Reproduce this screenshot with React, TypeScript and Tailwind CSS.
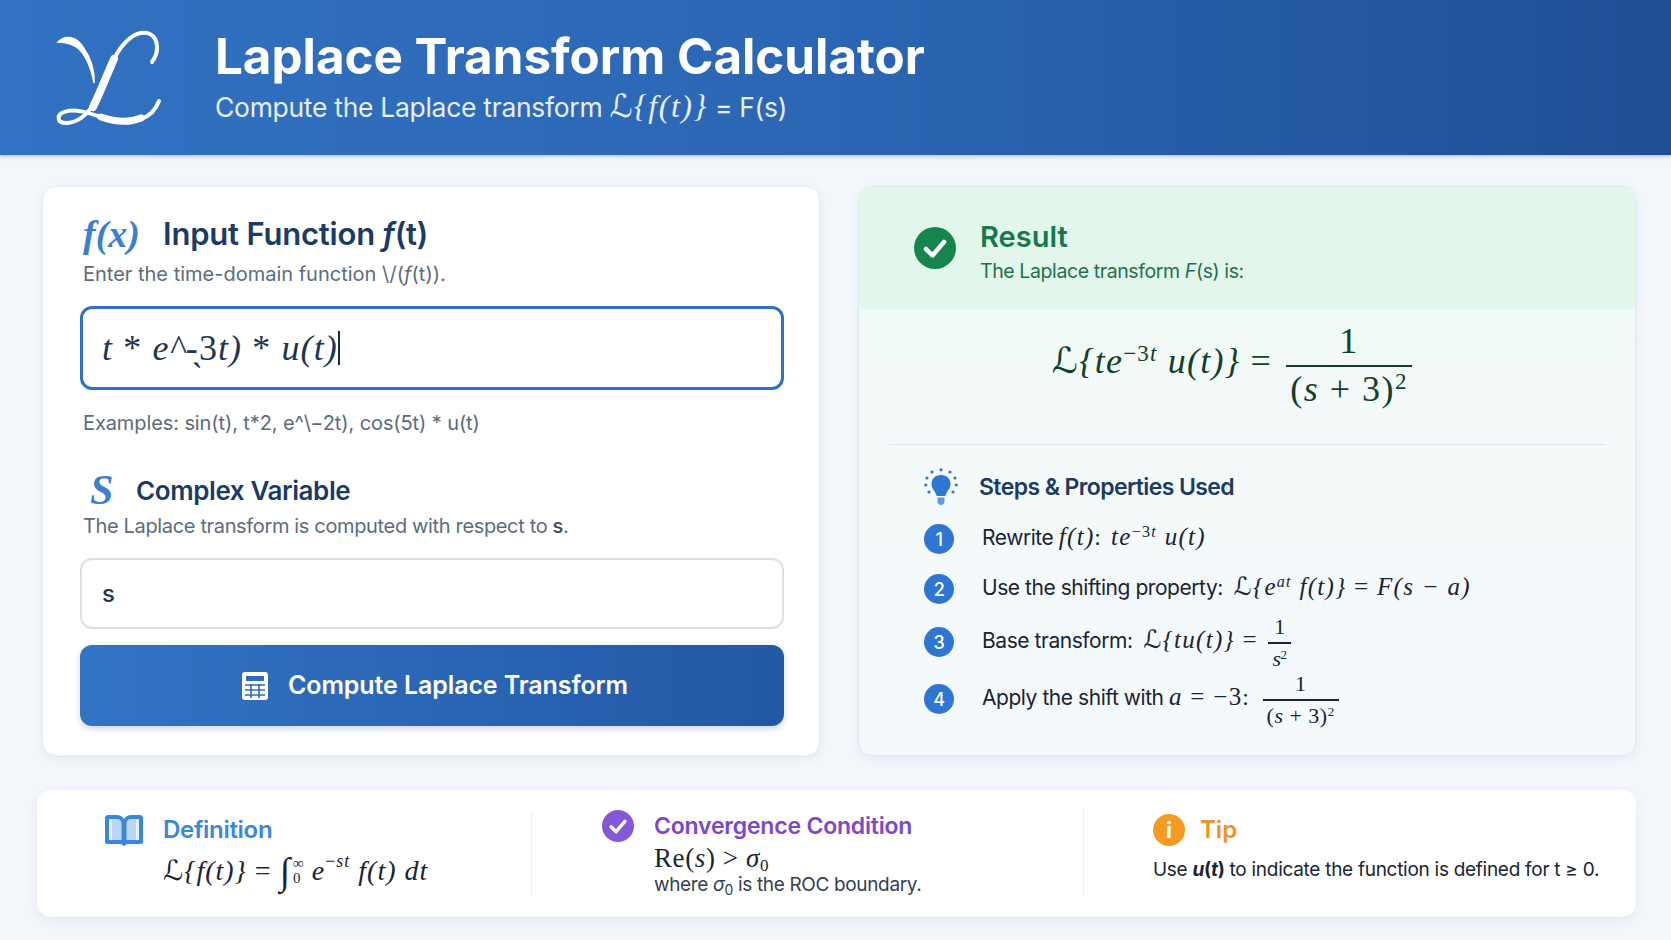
import type { ReactNode } from "react";

function M({ children, className = "" }: { children: ReactNode; className?: string }) {
  return <span className={`font-['Liberation_Serif','DejaVu_Serif',serif] italic whitespace-nowrap ${className}`}>{children}</span>;
}

function R({ children }: { children: ReactNode }) {
  return <span className="not-italic">{children}</span>;
}

function Scr() {
  return <span className="font-['DejaVu_Serif','DejaVu_Sans',serif] italic font-normal">ℒ</span>;
}

function Frac({ top, bottom, className = "", gap = "pb-1" }: { top: ReactNode; bottom: ReactNode; className?: string; gap?: string }) {
  return (
    <span className={`inline-flex flex-col items-center align-middle not-italic ${className}`}>
      <span className={`leading-none px-1 ${gap}`}>{top}</span>
      <span className="leading-none px-1 pt-1 border-t-2 border-current self-stretch text-center">{bottom}</span>
    </span>
  );
}

function Logo() {
  return (
    <svg width="115" height="105" viewBox="50 25 115 105" fill="none" stroke="white" strokeLinecap="round">
      <path d="M57 41 C64 34 75 35 82 46 C89 56 94 67 93 82 C90 66 85 55 78 48 C71 42 64 41 57 41 Z" fill="white" strokeWidth="1.500" />
      <path d="M151 61 C158 52 158 38 149 33 C136 28 122 40 113 58 C104 76 100 92 90 107 C84 116 74 122 65 122 C56 122 55 114 63 111 C74 107 88 112 100 116 C114 121 128 122 140 118 C149 115 155 108 158 100" strokeWidth="4" />
      <path d="M113 58 C105 76 99 92 92 106" strokeWidth="8" />
      <path d="M100 116 C114 121 128 122 140 117" strokeWidth="7" />
    </svg>
  );
}

function CheckDot({ size, color }: { size: number; color: string }) {
  return (
    <svg width={size} height={size} viewBox="0 0 42 42">
      <circle cx="21" cy="21" r="21" fill={color} />
      <path d="M12 22 L18.500 28.500 L30 15" fill="none" stroke="white" strokeWidth="4.500" strokeLinecap="round" strokeLinejoin="round" />
    </svg>
  );
}

function Calc() {
  return (
    <svg width="26" height="28" viewBox="0 0 26 28">
      <rect x="0" y="0" width="26" height="28" rx="3" fill="white" />
      <rect x="4" y="4" width="18" height="5" fill="#2f6bb9" />
      <path d="M3 13H23M3 18H23M3 23H23M9 12V26M17 12V26" stroke="#2f6bb9" strokeWidth="1.600" />
    </svg>
  );
}

function Bulb() {
  return (
    <svg width="34" height="38" viewBox="0 0 34 38" fill="#2f76d2">
      <path d="M17 7 C11 7 7.500 11 7.500 16 C7.500 20 10 22 11.500 25 C12 26.500 12.500 27.500 13 28 H21 C21.500 27.500 22 26.500 22.500 25 C24 22 26.500 20 26.500 16 C26.500 11 23 7 17 7 Z" />
      <path d="M13.500 29.500 H20.500 V33 C20.500 35.500 19 37 17 37 C15 37 13.500 35.500 13.500 33 Z" fill="#5f9be0" />
      <circle cx="17" cy="1.800" r="1.600" />
      <circle cx="8" cy="4" r="1.600" />
      <circle cx="26" cy="4" r="1.600" />
      <circle cx="3" cy="10" r="1.600" />
      <circle cx="31" cy="10" r="1.600" />
      <circle cx="1.800" cy="17" r="1.600" />
      <circle cx="32.200" cy="17" r="1.600" />
      <circle cx="5" cy="24" r="1.600" />
      <circle cx="29" cy="24" r="1.600" />
    </svg>
  );
}

function Book() {
  return (
    <svg width="38" height="31" viewBox="0 0 38 31">
      <path d="M0 3 C0 1 1.500 0 3.500 0 H11 C15 0 19 2 19 5 C19 2 23 0 27 0 H34.500 C36.500 0 38 1 38 3 V27 C38 28 37 29 36 29 H23 C21 29 20 31 19 31 C18 31 17 29 15 29 H2 C1 29 0 28 0 27 Z" fill="#3a87dc" />
      <path d="M4 4 H11 C14 4 16.500 5.500 16.500 8 V25 H4 Z M21.500 8 C21.500 5.500 24 4 27 4 H34 V25 H21.500 Z" fill="#e6f1fb" />
      <path d="M7 4 H11 C14 4 16.500 5.500 16.500 8 V25 H7 Z M21.500 8 C21.500 5.500 24 4 27 4 H31 V25 H21.500 Z" fill="#3a87dc" opacity="0.25" />
    </svg>
  );
}

function Num({ n }: { n: number }) {
  return (
    <span className="w-[30px] h-[30px] rounded-full bg-[#2f76d2] text-white text-[18px] font-medium flex items-center justify-center shrink-0">
      {n}
    </span>
  );
}

const mathCls = "text-[25px] tracking-[1.300px]";

const steps: ReactNode[] = [
  <>
    Rewrite <M className={mathCls}>f(t)</M>:&nbsp; <M className={mathCls}>te<sup className="text-[16px] not-italic">−3<i>t</i></sup> u(t)</M>
  </>,
  <>
    Use the shifting property:&nbsp; <M className={mathCls}><Scr />{"{"}e<sup className="text-[16px]">at</sup> f(t){"}"} <R>=</R> F(s − a)</M>
  </>,
  <>
    Base transform:&nbsp; <M className={mathCls}><Scr />{"{"}tu(t){"}"} <R>=</R> </M>
    <M className="text-[22px]"><Frac top="1" bottom={<i>s<sup className="text-[13px] not-italic">2</sup></i>} className="ml-[3px]" /></M>
  </>,
  <>
    Apply the shift with <M className={mathCls}>a <R>= −3</R></M>:&nbsp;
    <M className="text-[22px] tracking-[0.5px]"><Frac top="1" bottom={<>(<i>s</i> + 3)<sup className="text-[13px]">2</sup></>} className="ml-[9px]" /></M>
  </>,
];

const stepRows = ["h-[46px]", "h-[54px]", "h-[52px]", "h-[62px]"];
const stepText = ["-mt-[4px]", "-mt-[4px]", "mt-[1px]", "mt-[1px]"];

export default function App() {
  return (
    <div className="w-[1671px] h-[940px] overflow-hidden bg-[#f3f7fc] font-['Inter',sans-serif]">
      <header className="h-[155px] pl-[51px] flex items-center bg-gradient-to-r from-[#3272c2] via-[#2b66b4] to-[#1f4f95] shadow-[0_1px_4px_rgba(30,60,110,0.35)]">
        <div className="w-[164px] shrink-0 mt-[2px]"><Logo /></div>
        <div className="text-white">
          <h1 className="text-[49.300px] leading-[54px] font-bold">Laplace Transform Calculator</h1>
          <p className="mt-[4px] text-[26.500px] leading-[38px] font-normal tracking-[-0.3px] text-[#e6effa]">
            Compute the Laplace transform <M className="text-[32px] tracking-[1.500px]"><Scr />{"{"}f(t){"}"}</M> = F(s)
          </p>
        </div>
      </header>

      <main className="pl-[42px] pr-[35px] pt-[31px]">
        <div className="grid grid-cols-2 gap-[38px]">
          <section className="h-[570px] bg-white rounded-[14px] border border-[#e6ebf2] shadow-[0_3px_10px_rgba(30,60,110,0.07)] pl-[37px] pr-[35px] pt-[27px] flex flex-col">
            <div className="h-[40px] ml-[3px] flex items-center">
              <M className="w-[80px] text-[38px] font-bold text-[#3a7fd0]">f(x)</M>
              <h2 className="text-[31px] font-semibold tracking-[-0.2px] text-[#1c3a66]">Input Function <span className="italic">f</span>(t)</h2>
            </div>
            <p className="mt-[6px] ml-[3px] h-[28px] leading-[28px] text-[20px] text-[#5d6b7c]">Enter the time-domain function \/(<i>f</i>(t)).</p>
            <div className="mt-[18px] h-[84px] shrink-0 rounded-[12px] border-[3px] border-[#2f72c4] pl-[19px] flex items-center">
              <M className="text-[36px] text-[#24344d] tracking-[1.100px]">
                t <R>*</R> e^{"-\u0316"}<R>3</R>t) <R>*</R> u(t)
              </M>
              <span className="w-[2px] h-[34px] bg-[#1c2a40]" />
            </div>
            <p className="mt-[19px] ml-[3px] h-[28px] leading-[28px] text-[20px] tracking-[-0.1px] text-[#5d6b7c]">Examples: sin(t), t*2, e^\−2t), cos(5t) * u(t)</p>
            <div className="mt-[33px] h-[40px] ml-[10px] flex items-center">
              <M className="w-[46px] text-[42px] font-bold text-[#3a7fd0]">S</M>
              <h2 className="text-[26px] font-semibold tracking-[-0.4px] text-[#1c3a66]">Complex Variable</h2>
            </div>
            <p className="mt-[2px] ml-[3px] h-[28px] leading-[28px] text-[20px] tracking-[-0.35px] text-[#5d6b7c]">The Laplace transform is computed with respect to <span className="font-medium text-[#3d4a5c]">s</span>.</p>
            <div className="mt-[18px] h-[71px] shrink-0 rounded-[12px] border-2 border-[#dcdfe4] pl-[20px] flex items-center text-[24px] font-medium text-[#24344d]">s</div>
            <button className="mt-[16px] h-[81px] shrink-0 rounded-[12px] bg-gradient-to-r from-[#3274c4] to-[#2358a5] shadow-[0_3px_6px_rgba(30,60,110,0.2)] pl-[6px] flex items-center justify-center gap-[20px] text-white text-[25px] font-semibold tracking-[-0.1px]">
              <Calc />
              Compute Laplace Transform
            </button>
          </section>

          <section className="h-[570px] rounded-[14px] border border-[#dfe7ef] shadow-[0_3px_10px_rgba(30,60,110,0.07)] overflow-hidden bg-gradient-to-b from-[#eefaf4] via-[#f4f9fa] to-[#f5f9fd] flex flex-col">
            <div className="h-[122px] shrink-0 bg-[#e2f6ec] pl-[55px] flex items-center gap-[24px]">
              <CheckDot size={42} color="#15844f" />
              <div className="mt-[9px]">
                <h2 className="text-[29px] leading-[36px] font-semibold text-[#147a4b]">Result</h2>
                <p className="text-[19.500px] leading-[32px] tracking-[-0.4px] text-[#1f7050]">The Laplace transform <i>F</i>(s) is:</p>
              </div>
            </div>
            <div className="h-[136px] shrink-0 mx-[30px] border-b border-[#dfe6ec] flex items-center justify-center pb-[24px] pr-[30px] text-[#123f2c]">
              <M className="text-[36px] tracking-[1.200px]">
                <Scr />{"{"}te<sup className="text-[23px] not-italic">−3<i>t</i></sup> u(t){"}"} <R>=</R>{" "}
                <Frac top="1" bottom={<>(<i>s</i> + 3)<sup className="text-[23px]">2</sup></>} gap="pb-[6px]" className="tracking-[1.500px] ml-1" />
              </M>
            </div>
            <div className="pl-[65px] pt-[22px]">
              <div className="h-[40px] flex items-center gap-[21px]">
                <Bulb />
                <h3 className="text-[23px] font-semibold tracking-[-0.6px] text-[#1c3a66]">Steps &amp; Properties Used</h3>
              </div>
              <ol className="mt-[9px] flex flex-col">
                {steps.map((s, i) => (
                  <li key={i} className={`flex items-center gap-[28px] text-[21px] tracking-[-0.45px] text-[#1a2433] ${stepRows[i]}`}>
                    <Num n={i + 1} />
                    <div className={stepText[i]}>{s}</div>
                  </li>
                ))}
              </ol>
            </div>
          </section>
        </div>

        <section className="mt-[34px] -ml-[5px] h-[127px] bg-white rounded-[14px] shadow-[0_4px_12px_rgba(30,60,110,0.07)] grid grid-cols-[495px_552px_1fr] py-[22px]">
          <div className="pl-[68px] border-r border-[#eef1f5]">
            <div className="flex items-center gap-[20px] h-[36px]">
              <Book />
              <h3 className="text-[24px] font-semibold text-[#3a87dc] tracking-[-0.3px]">Definition</h3>
            </div>
            <div className="mt-[3px] ml-[58px] h-[40px] flex items-center text-[#1a2433]">
              <M className="text-[28px] tracking-[1px] flex items-center">
                <Scr />{"{"}f(t){"}"}&nbsp;<R>=</R>&nbsp;<span className="text-[38px] leading-none">∫</span>
                <span className="inline-flex flex-col text-[15px] leading-[15px] not-italic ml-[2px] mr-[7px]"><span>∞</span><span>0</span></span>
                e<sup className="text-[18px] -mt-[2px]"><R>−</R>st</sup>&nbsp;f(t) dt
              </M>
            </div>
          </div>
          <div className="pl-[70px] border-r border-[#eef1f5] -mt-[4px]">
            <div className="flex items-center gap-[20px] h-[36px]">
              <CheckDot size={32} color="#8757d9" />
              <h3 className="text-[23px] font-semibold text-[#7f47c9] tracking-[-0.2px]">Convergence Condition</h3>
            </div>
            <div className="ml-[52px] h-[28px] leading-[28px]">
              <M className="text-[27px] tracking-[0.6px] text-[#1a2433]"><R>Re(</R>s<R>) &gt; </R>σ<sub className="text-[17px] not-italic">0</sub></M>
            </div>
            <p className="ml-[52px] text-[19px] leading-[26px] tracking-[-0.35px] text-[#33404f]">where <i>σ</i><sub className="text-[14px]">0</sub> is the ROC boundary.</p>
          </div>
          <div className="pl-[69px]">
            <div className="flex items-center gap-[15px] h-[36px]">
              <span className="w-[32px] h-[32px] rounded-full bg-[#f59a23] text-white text-[22px] font-bold flex items-center justify-center">i</span>
              <h3 className="text-[24px] font-semibold text-[#f0912a]">Tip</h3>
            </div>
            <p className="mt-[8px] text-[19px] tracking-[-0.28px] whitespace-nowrap text-[#1a2433]">Use <b><i>u</i>(<i>t</i>)</b> to indicate the function is defined for t ≥ 0.</p>
          </div>
        </section>
      </main>
    </div>
  );
}
